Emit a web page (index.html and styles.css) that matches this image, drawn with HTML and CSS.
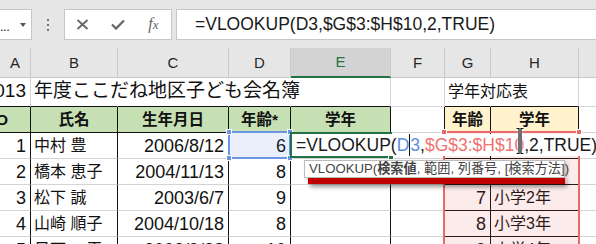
FILE: index.html
```html
<!doctype html>
<html lang="ja">
<head>
  <meta charset="utf-8">
  <meta name="viewport" content="width=device-width,initial-scale=1">
  <title>子ども会名簿 VLOOKUP</title>
  <link rel="stylesheet" href="styles.css">
</head>
<body>
  <div class="toolbar">
    <div class="namebox"><span class="nb-text">...</span><span class="nb-arrow"></span></div>
    <div class="grip"><i></i><i></i><i></i></div>
    <div class="fbtns">
      <svg class="ico" width="13" height="11" viewBox="0 0 13 11"><path d="M1.5 1L11.5 10M11.5 1L1.5 10"/></svg>
      <svg class="ico ok" width="14" height="11" viewBox="0 0 14 11"><path d="M1 5.5L5 9.5L13 1.5"/></svg>
      <span class="fx"><i>f</i><i>x</i></span>
    </div>
    <div class="fbar">=VLOOKUP(D3,$G$3:$H$10,2,TRUE)</div>
  </div>

  <div class="sheet">
    <!-- column headers -->
    <div class="c ch">A</div>
    <div class="c ch">B</div>
    <div class="c ch">C</div>
    <div class="c ch">D</div>
    <div class="c ch on">E</div>
    <div class="c ch">F</div>
    <div class="c ch">G</div>
    <div class="c ch">H</div>
    <div class="c ch"></div>

    <!-- row 1 -->
    <div class="c r t bb">2013</div>
    <div class="c t ov bb">年度ここだね地区子ども会名簿</div>
    <div class="c ov bb"></div>
    <div class="c ov bb"></div>
    <div class="c bb"></div>
    <div class="c"></div>
    <div class="c sub ov bb">学年対応表</div>
    <div class="c bb"></div>
    <div class="c"></div>

    <!-- row 2 -->
    <div class="c th no br bb">NO</div>
    <div class="c th br bb">氏名</div>
    <div class="c th br bb">生年月日</div>
    <div class="c th br bb">年齢*</div>
    <div class="c th br bb">学年</div>
    <div class="c br"></div>
    <div class="c th y br bb">年齢</div>
    <div class="c th y br bb">学年</div>
    <div class="c"></div>

    <!-- row 3 -->
    <div class="c r n br">1</div>
    <div class="c br">中村 豊</div>
    <div class="c r n br">2006/8/12</div>
    <div class="c r n br">6</div>
    <div class="c br"></div>
    <div class="c br"></div>
    <div class="c r n br bb"></div>
    <div class="c br bb"></div>
    <div class="c"></div>

    <!-- row 4 -->
    <div class="c r n br">2</div>
    <div class="c br">橋本 恵子</div>
    <div class="c r n br">2004/11/13</div>
    <div class="c r n br">8</div>
    <div class="c br"></div>
    <div class="c br"></div>
    <div class="c r n br bb"></div>
    <div class="c br bb"></div>
    <div class="c"></div>

    <!-- row 5 -->
    <div class="c r n br">3</div>
    <div class="c br">松下 誠</div>
    <div class="c r n br">2003/6/7</div>
    <div class="c r n br">9</div>
    <div class="c br"></div>
    <div class="c br"></div>
    <div class="c r n br bb">7</div>
    <div class="c br bb">小学2年</div>
    <div class="c"></div>

    <!-- row 6 -->
    <div class="c r n br">4</div>
    <div class="c br">山崎 順子</div>
    <div class="c r n br">2004/10/18</div>
    <div class="c r n br">8</div>
    <div class="c br"></div>
    <div class="c br"></div>
    <div class="c r n br bb">8</div>
    <div class="c br bb">小学3年</div>
    <div class="c"></div>

    <!-- row 7 -->
    <div class="c r n br">5</div>
    <div class="c br">日下 一平</div>
    <div class="c r n br">2002/9/28</div>
    <div class="c r n br">10</div>
    <div class="c br"></div>
    <div class="c br"></div>
    <div class="c r n br bb">9</div>
    <div class="c br bb">小学4年</div>
    <div class="c"></div>

    <!-- selection / edit overlays -->
    <div class="sel-d"><b class="h tl"></b><b class="h tr"></b><b class="h bl"></b><b class="h br2"></b></div>
    <div class="sel-e"><b class="h br2"></b></div>
    <div class="range"><b class="h tl"></b><b class="h tr"></b></div>
    <div class="editor">=VLOOKUP(<span class="ref-d">D<span class="caret"></span>3</span>,<span class="ref-r">$G$3:$H$10</span>,2,TRUE)</div>
    <div class="tip">VLOOKUP(<b>検索値</b>, 範囲, 列番号, [検索方法])</div>
    <div class="mark"></div>
    <svg class="ibeam" width="10" height="28" viewBox="0 0 10 28">
      <path d="M1.5 1.5H4V26.5H1.5M8.5 1.5H6V26.5H8.5" fill="none" stroke="#fff" stroke-width="2.5"/>
      <path d="M1.5 1.5H4V26.5H1.5M8.5 1.5H6V26.5H8.5M4 2V26M6 2V26" fill="none" stroke="#111" stroke-width="1.2"/>
    </svg>
  </div>
</body>
</html>
```

FILE: styles.css
```css
*{box-sizing:border-box}
body{margin:0;width:596px;height:244px;overflow:hidden;background:#fff;font-family:"Liberation Sans","Noto Sans CJK JP",sans-serif;color:#111}

/* formula bar */
.toolbar{height:48px;background:#e6e6e6;display:flex;align-items:flex-start;padding-top:9px}
.namebox{width:33px;height:31px;margin-left:-1px;background:#fff;border:1px solid #c6c6c6;display:flex;align-items:center;justify-content:space-between;padding:0 5px 0 0;font-size:13px}
.nb-text{margin-top:4px;letter-spacing:-.5px}
.nb-arrow{width:0;height:0;border-left:3.5px solid transparent;border-right:3.5px solid transparent;border-top:4px solid #555}
.grip{width:32px;height:31px;display:flex;flex-direction:column;align-items:center;justify-content:center;gap:3px}
.grip i{width:2px;height:2px;background:#777}
.fbtns{width:108px;height:31px;background:#fff;border:1px solid #c6c6c6;display:grid;grid-template-columns:repeat(3,1fr);align-items:center;justify-items:center}
.ico path{fill:none;stroke:#666;stroke-width:1.8}
.ico.ok path{stroke-width:2.3}
.fx{font-family:"Liberation Serif",serif;font-style:italic;font-size:16px;color:#666;margin-top:-2px}
.fx i:last-child{font-size:13px}
.fbar{flex:1;height:31px;margin-left:4px;background:#fff;border:1px solid #c6c6c6;border-right:none;padding-left:18px;font-size:17.5px;line-height:29px;white-space:nowrap;color:#1a1a1a}

/* sheet */
.sheet{position:relative;height:196px;overflow:hidden;display:grid;grid-template-columns:31px 87px 111px 62px 100px 54px 46px 88px 18px;grid-template-rows:30px 29px 26px repeat(5,26px)}
.c{border-right:1px solid #d4d4d4;border-bottom:1px solid #d4d4d4;display:flex;align-items:center;padding:0 3px;white-space:nowrap;font-size:16px;line-height:20px;min-width:0}
.ch{background:#e6e6e6;border-color:#c9c9c9;justify-content:center;font-size:15px;color:#262626}
.ch.on{background:#d3d3d3;color:#217346;border-bottom:2px solid #217346}
.r{justify-content:flex-end;padding-right:4px}
.n{font-size:18px}
.t{font-size:19px;padding-bottom:2px}
.sub{font-size:16px}
.ov{border-right-color:transparent}
.bb{border-bottom-color:#111}
.br{border-right-color:#111}
.th{background:#c6e0b4;font-weight:bold;justify-content:center;font-size:15.5px}
.th.y{background:#fff2cc}
.th.no{justify-content:flex-end;padding-right:22px}

/* overlays */
.h{position:absolute;width:6px;height:6px;background:inherit;border:1px solid #fff}
.tl{left:-4px;top:-4px}
.tr{right:-4px;top:-4px}
.bl{left:-4px;bottom:-4px}
.br2{right:-4px;bottom:-4px}
.sel-d{position:absolute;left:228px;top:83px;width:63px;height:28px;border:2px solid #6c95e4;background:rgba(70,120,220,.12)}
.sel-d .h{background:#6c95e4}
.sel-e{position:absolute;left:290px;top:84px;width:102px;height:26px;border:2px solid #217346}
.sel-e .h{background:#217346}
.range{position:absolute;left:443px;top:83px;width:137px;height:200px;border:2px solid #e8696b;background:rgba(232,90,90,.12)}
.range .h{background:#e8696b}
.editor{position:absolute;left:292px;top:86px;width:300px;height:22px;background:#fff;padding-left:4px;font-size:17.5px;line-height:22px;white-space:nowrap;color:#1a1a1a}
.ref-d{color:#5a8ee0}
.ref-r{color:#ef7272}
.caret{display:inline-block;width:0;height:22px;border-left:1px solid #111;vertical-align:top}
.tip{position:absolute;left:304px;top:112px;width:261px;height:18px;background:#fff;border:1px solid #bdbdbd;padding-left:4px;font-size:13.2px;line-height:16px;color:#444;white-space:nowrap;box-shadow:2px 2px 4px rgba(0,0,0,.2)}
.mark{position:absolute;left:308px;top:130px;width:257px;height:6px;background:#c00000;box-shadow:2px 3px 4px rgba(0,0,0,.4)}
.ibeam{position:absolute;left:515px;top:79px}
```
